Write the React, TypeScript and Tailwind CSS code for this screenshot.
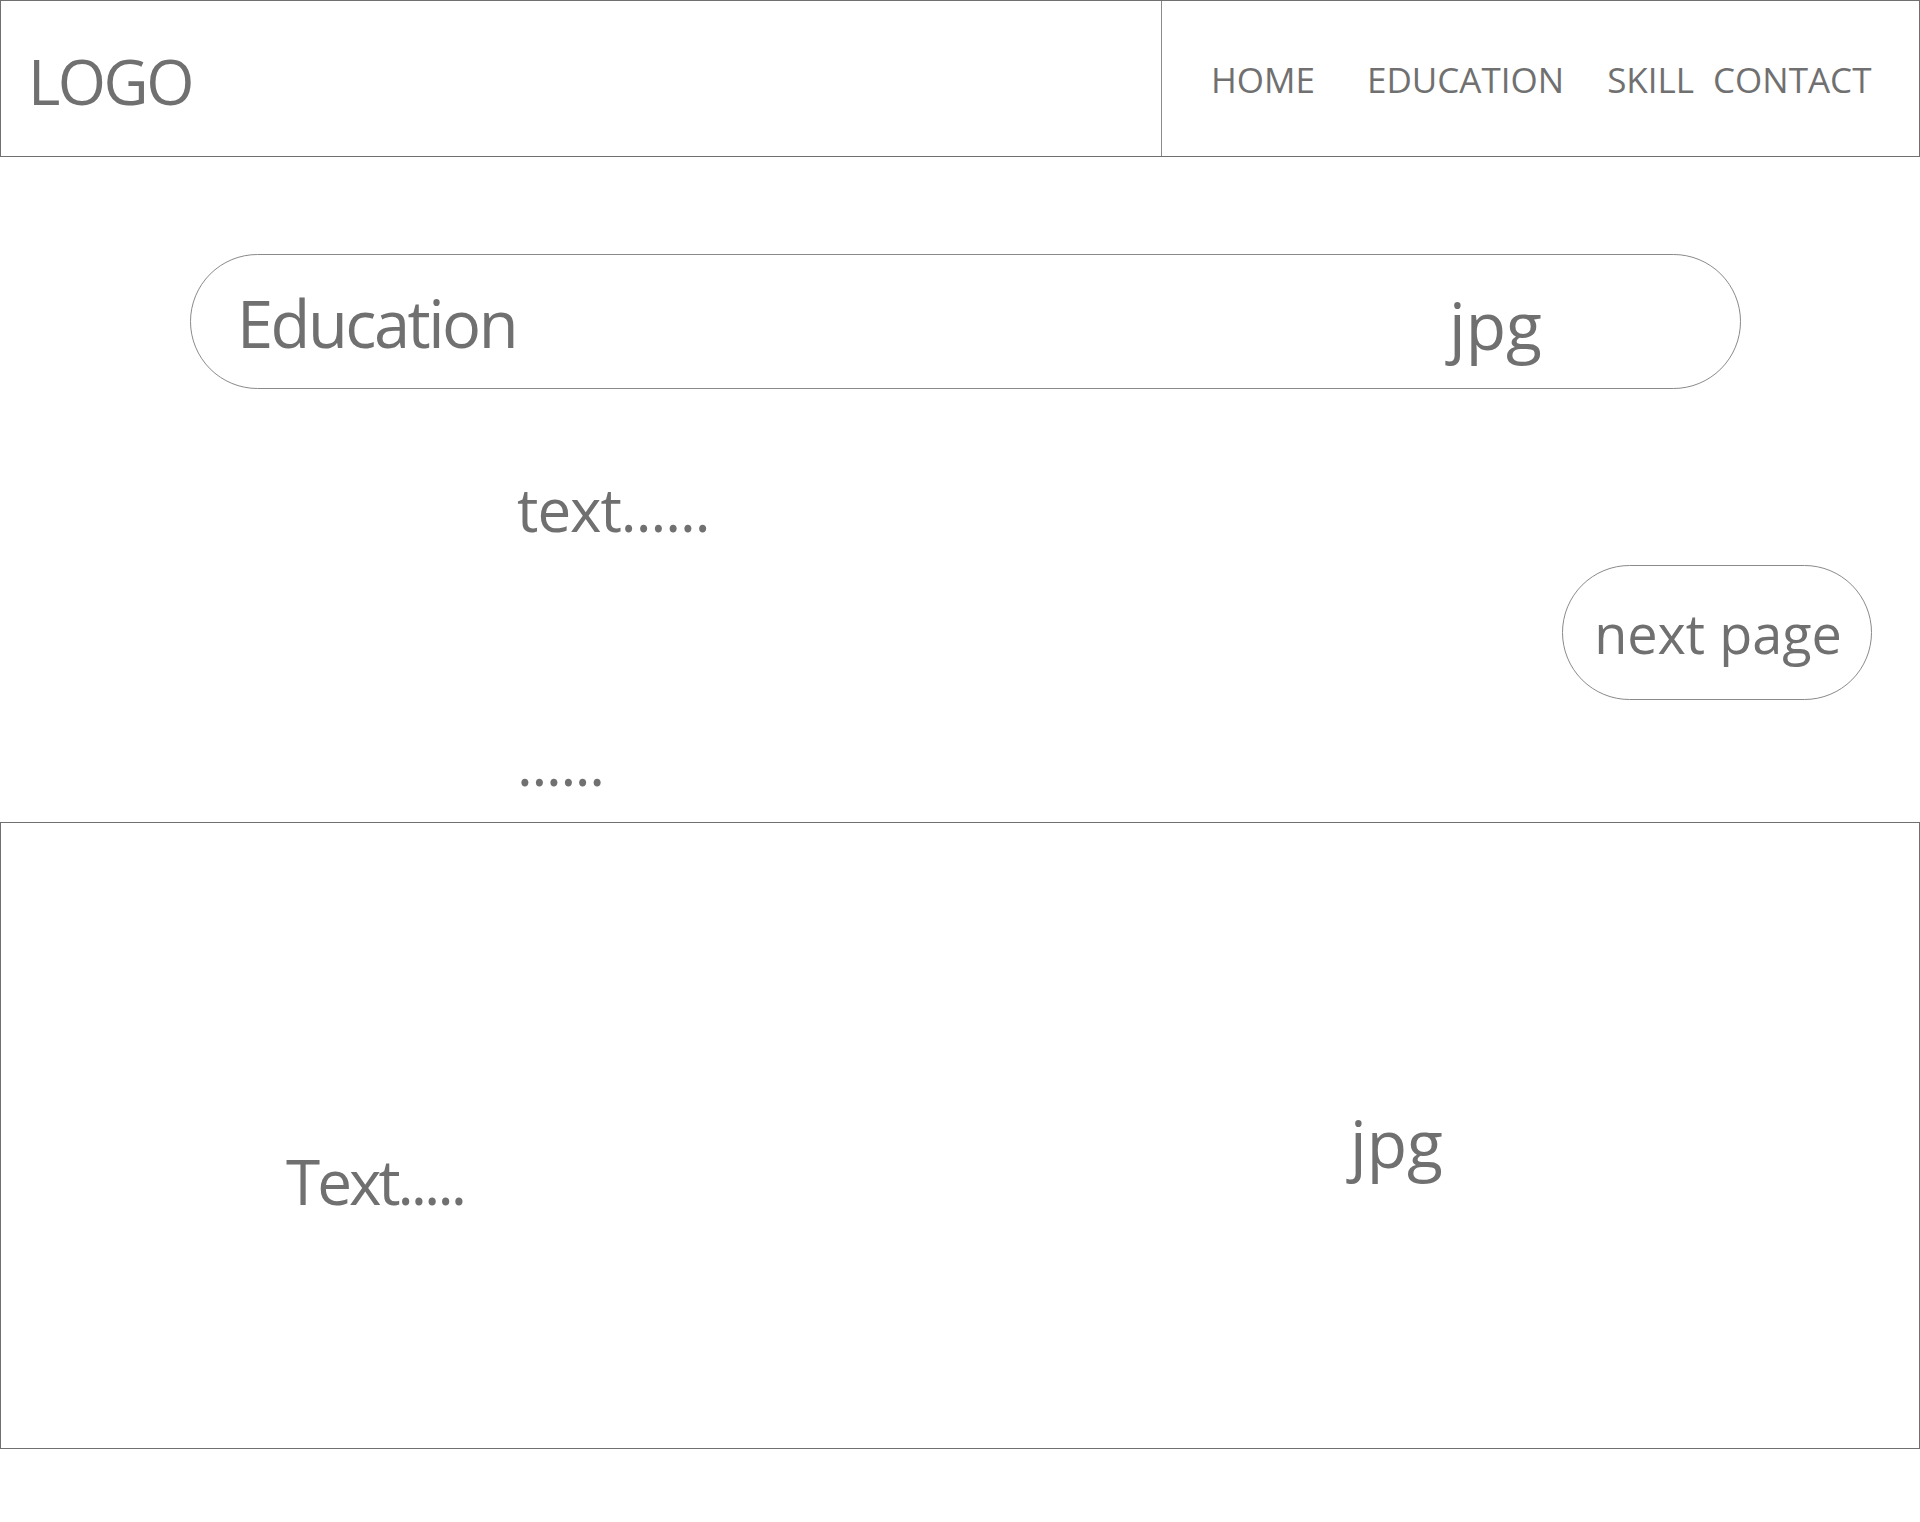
export default function App() {
  const font = { fontFamily: '"Open Sans", "Noto Sans", sans-serif' };
  return (
    <div className="w-[1920px] h-[1522px] bg-white text-[#707070]" style={font}>
      <header className="flex h-[157px] border border-[#707070]">
        <div className="w-[1161px] border-r border-[#8a8a8a] flex items-center pl-[27px] pt-[5px]">
          <span className="text-[62px] leading-none tracking-[-2.5px]">LOGO</span>
        </div>
        <nav className="flex-1 flex items-center pl-[49px] pt-[2px] text-[35px] leading-none">
          <span>HOME</span>
          <span className="ml-[52px]">EDUCATION</span>
          <span className="ml-[43px]">SKILL</span>
          <span className="ml-[19px]">CONTACT</span>
        </nav>
      </header>

      <section className="pt-[97px] pl-[190px]">
        <div className="w-[1551px] h-[135px] rounded-full border border-[#8a8a8a] flex items-center pl-[46px] pt-[4px]">
          <div className="w-[1212px]">
            <span className="text-[65px] leading-none tracking-[-2.5px]">Education</span>
          </div>
          <span className="text-[66px] leading-none">jpg</span>
        </div>
      </section>

      <section className="h-[433px] flex">
        <div className="pl-[517px] flex flex-col pt-[90px]">
          <span className="text-[60px] leading-none tracking-[-1px]">text......</span>
          <span className="text-[60px] leading-none tracking-[-1.3px] mt-[194px]">......</span>
        </div>
        <div className="flex-1 flex justify-end pr-[48px] pt-[176px]">
          <div className="w-[310px] h-[135px] rounded-full border border-[#8a8a8a] flex items-center justify-center pl-[2px]">
            <span className="text-[54px] leading-none">next page</span>
          </div>
        </div>
      </section>

      <section className="h-[627px] border border-[#707070] grid grid-cols-2">
        <div className="pl-[285px] pt-[327px]">
          <span className="text-[62px] leading-none tracking-[-3px]">Text.....</span>
        </div>
        <div className="pl-[390px] pt-[286px]">
          <span className="text-[66px] leading-none">jpg</span>
        </div>
      </section>
    </div>
  );
}
